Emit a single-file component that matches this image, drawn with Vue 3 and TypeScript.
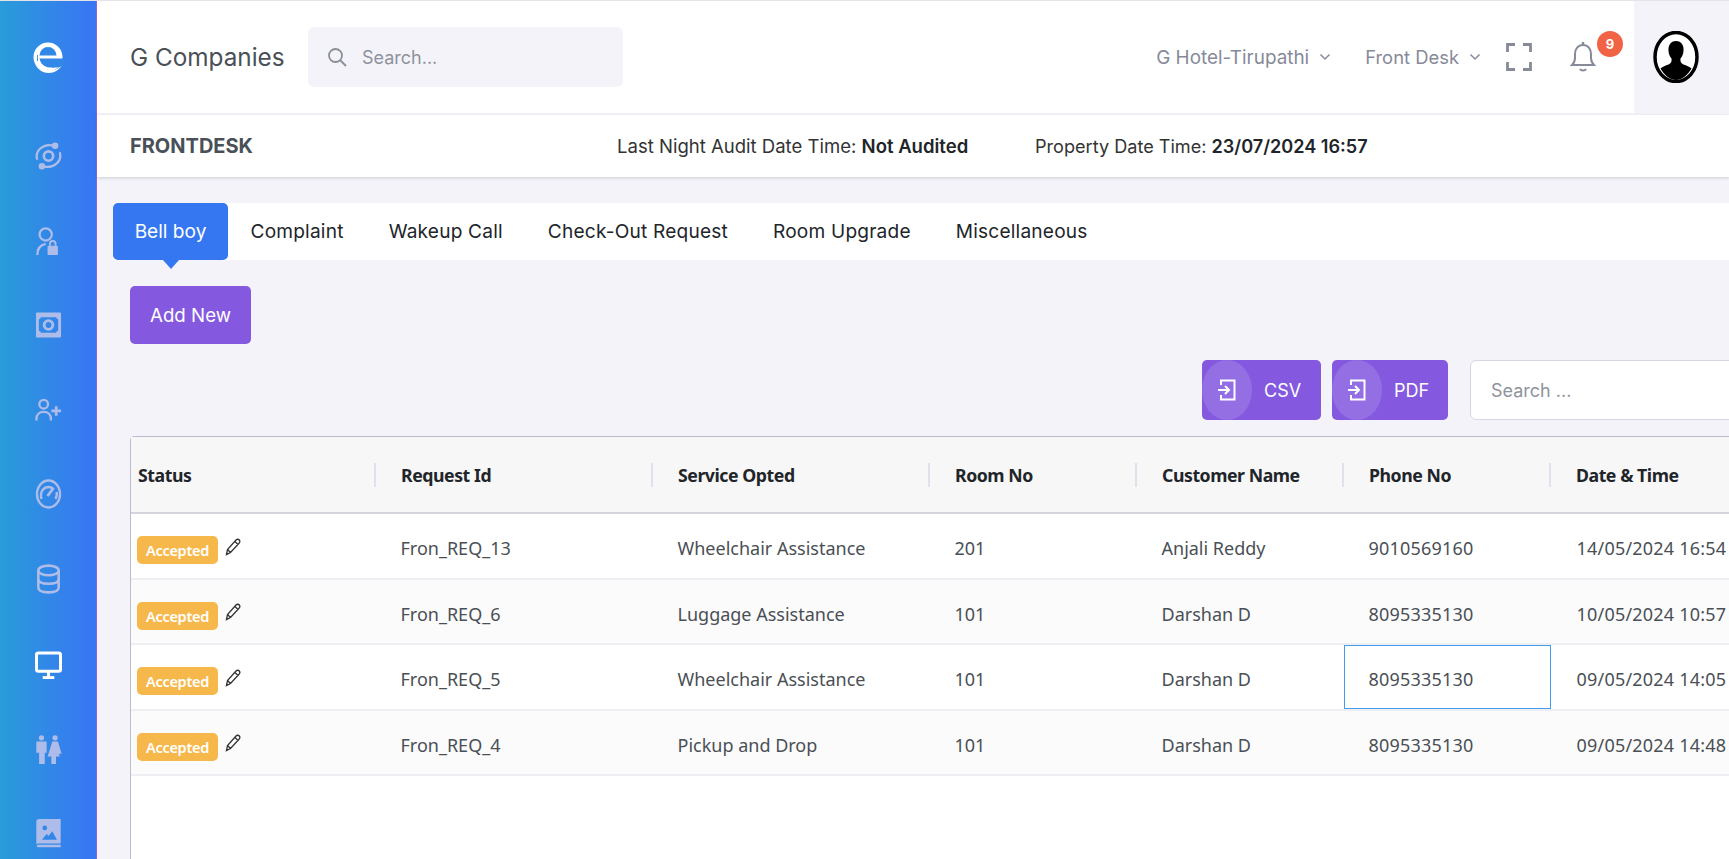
<script setup lang="ts">
const tabs = ['Complaint', 'Wakeup Call', 'Check-Out Request', 'Room Upgrade', 'Miscellaneous']
const headers = ['Status', 'Request Id', 'Service Opted', 'Room No', 'Customer Name', 'Phone No', 'Date & Time']
const rows = [
  { id: 'Fron_REQ_13', service: 'Wheelchair Assistance', room: '201', name: 'Anjali Reddy', phone: '9010569160', date: '14/05/2024 16:54' },
  { id: 'Fron_REQ_6', service: 'Luggage Assistance', room: '101', name: 'Darshan D', phone: '8095335130', date: '10/05/2024 10:57' },
  { id: 'Fron_REQ_5', service: 'Wheelchair Assistance', room: '101', name: 'Darshan D', phone: '8095335130', date: '09/05/2024 14:05' },
  { id: 'Fron_REQ_4', service: 'Pickup and Drop', room: '101', name: 'Darshan D', phone: '8095335130', date: '09/05/2024 14:48' },
]
</script>

<template>
  <div class="page">
    <aside class="sidebar">
      <div class="logo">
        <svg width="30" height="32" viewBox="0 0 30 32">
          <circle cx="15" cy="15" r="14.500" fill="#fff" />
          <path d="M1.500 21c3 7 9 10 14 10 6 0 11-3 14-9-3 4-8 7-14 7-6 0-11-3-14-8z" fill="#fff" />
          <path d="M6.500 13.500a8.500 8.500 0 0 1 17 0z" fill="#3188e6" />
          <path d="M6.500 16.500H31v6c-4 3-9 3.500-14.500 3-5.500-.5-9-4-10-9z" fill="#3188e6" />
          <path d="M4.500 13v6" fill="none" stroke="#3188e6" stroke-width=".9" />
        </svg>
      </div>
      <div class="nav">
        <svg class="ic dim" viewBox="0 0 28 32"><circle cx="14" cy="16" r="5" fill="none" stroke="currentColor" stroke-width="2.800" /><path d="M2 20C-1 10 9 2 20 5M26 12c3 10-7 18-18 15" fill="none" stroke="currentColor" stroke-width="2.400" /><circle cx="21" cy="5" r="3.500" fill="currentColor" /><circle cx="7" cy="27" r="3.500" fill="currentColor" /></svg>
      </div>
      <div class="nav">
        <svg class="ic dim" viewBox="0 0 28 32"><circle cx="11" cy="9" r="6.500" fill="none" stroke="currentColor" stroke-width="2.400" /><path d="M2 31c0-7 4-11 9-12" fill="none" stroke="currentColor" stroke-width="2.400" /><rect x="13" y="21" width="11" height="10" rx="1" fill="currentColor" /><path d="M15.500 21v-2a3 3 0 0 1 6 0v2" fill="none" stroke="currentColor" stroke-width="2" /></svg>
      </div>
      <div class="nav">
        <svg class="ic dim" viewBox="0 0 28 28"><path fill-rule="evenodd" fill="currentColor" d="M2 1h24a1 1 0 0 1 1 1v24a1 1 0 0 1-1 1H2a1 1 0 0 1-1-1V2a1 1 0 0 1 1-1zm4 5c0 1-1 2-2 2v12c1 0 2 1 2 2h16c0-1 1-2 2-2V8c-1 0-2-1-2-2zm8 2a6 6 0 1 1 0 12 6 6 0 0 1 0-12zm0 3a3 3 0 1 0 0 6 3 3 0 0 0 0-6z" /></svg>
      </div>
      <div class="nav">
        <svg class="ic dim" viewBox="0 0 28 24"><circle cx="9" cy="6" r="4.500" fill="none" stroke="currentColor" stroke-width="2.400" /><path d="M1.500 23v-2c0-4 3-7 7.500-7s7.500 3 7.500 7v2" fill="none" stroke="currentColor" stroke-width="2.400" /><path d="M22 8v10M17 13h10" stroke="currentColor" stroke-width="2.800" /></svg>
      </div>
      <div class="nav">
        <svg class="ic dim" viewBox="0 0 26 30"><ellipse cx="13" cy="15" rx="11.500" ry="13.500" fill="none" stroke="currentColor" stroke-width="2.400" /><path d="M6 20c-2-7 2-12 7-12 2 0 4 1 5 2M21 13c1 3 0 5-1 7" fill="none" stroke="currentColor" stroke-width="2.400" /><path d="M12 17l6-8" stroke="currentColor" stroke-width="2.800" /></svg>
      </div>
      <div class="nav">
        <svg class="ic dim" viewBox="0 0 24 28"><ellipse cx="12" cy="6" rx="9.500" ry="4.500" fill="none" stroke="currentColor" stroke-width="2.400" /><path d="M2.500 6v16c0 3 4 4.500 9.500 4.500s9.500-1.500 9.500-4.500V6M2.500 14c0 3 4 4.500 9.500 4.500s9.500-1.500 9.500-4.500" fill="none" stroke="currentColor" stroke-width="2.400" /></svg>
      </div>
      <div class="nav low3">
        <svg class="ic on" viewBox="0 0 28 30"><rect x="1.500" y="1.500" width="25" height="19" rx="2" fill="none" stroke="currentColor" stroke-width="3.200" /><path d="M14 21v5" stroke="currentColor" stroke-width="3.200" /><path d="M8 27h12" stroke="currentColor" stroke-width="3" /></svg>
      </div>
      <div class="nav low2">
        <svg class="ic dim" viewBox="0 0 28 32"><circle cx="6.500" cy="3" r="2.800" fill="currentColor" /><circle cx="21" cy="3" r="2.800" fill="currentColor" /><path fill="currentColor" d="M1 7h11v12H10v12H4V19H1zM18 7h6l4 13h-3l1 3h-4v8h-5v-8h-4l2-6z" /></svg>
      </div>
      <div class="nav low2">
        <svg class="ic dim" viewBox="0 0 26 32"><path fill-rule="evenodd" fill="currentColor" d="M3 0h23v26H3c-1 0-2 0-3 1V3a3 3 0 0 1 3-3zm6 7a2.500 2.500 0 1 0 0 5 2.500 2.500 0 0 0 0-5zm-3 15h16l-5-9-4 5-2-2z" /><path d="M.5 29c0-1 1-1.500 2.500-1.500h23v2.500H3c-1.500 0-2.500 0-2.500-1z" fill="currentColor" /></svg>
      </div>
    </aside>

    <main class="main">
      <header class="topbar">
        <span class="brand">G Companies</span>
        <div class="global-search">
          <svg class="search-ic" width="20" height="20" viewBox="0 0 20 20"><circle cx="8.500" cy="8.500" r="6.500" fill="none" stroke="#8a8f99" stroke-width="1.800" /><path d="M13.500 13.500L19 19" stroke="#8a8f99" stroke-width="1.800" /></svg>
          <span>Search...</span>
        </div>
        <div class="spacer"></div>
        <span class="menu hotel">G Hotel-Tirupathi<svg class="chev" viewBox="0 0 12 8"><path d="M1.500 1.500L6 6l4.500-4.500" fill="none" stroke="currentColor" stroke-width="1.500" /></svg></span>
        <span class="menu desk">Front Desk<svg class="chev" viewBox="0 0 12 8"><path d="M1.500 1.500L6 6l4.500-4.500" fill="none" stroke="currentColor" stroke-width="1.500" /></svg></span>
        <svg class="expand" width="26" height="28" viewBox="0 0 26 28"><path d="M1.500 9V1.500H9M17 1.500h7.500V9M24.500 19v7.500H17M9 26.500H1.500V19" fill="none" stroke="#878a99" stroke-width="2.800" /></svg>
        <div class="bell">
          <svg width="26" height="32" viewBox="0 0 26 32"><path d="M2 24c2-2 3-4 3-7v-4c0-5 3-9 8-9s8 4 8 9v4c0 3 1 5 3 7z" fill="none" stroke="#878a99" stroke-width="2" /><path d="M13 1v3" stroke="#878a99" stroke-width="2.400" /><path d="M10 28c1 2 5 2 6 0" fill="none" stroke="#878a99" stroke-width="2" /></svg>
          <span class="badge">9</span>
        </div>
        <div class="avatar-cell">
          <svg width="46" height="52" viewBox="0 0 46 52"><ellipse cx="23" cy="26" rx="21" ry="24.500" fill="#fff" stroke="#000" stroke-width="3.500" /><path d="M23 10c-5.500 0-8 4.500-7.500 10 .3 3 1.300 5.500 3 7.500.5 3-.5 5-3 6-3 1-6 2-8 4 4 7 10 11.500 15.500 11.500S34.500 44.500 38.500 37.500c-2-2-5-3-8-4-2.500-1-3.500-3-3-6 1.700-2 2.700-4.500 3-7.500C31 14.500 28.500 10 23 10z" fill="#000" /></svg>
        </div>
      </header>

      <section class="subbar">
        <strong class="title">FRONTDESK</strong>
        <span class="audit">Last Night Audit Date Time: <b>Not Audited</b></span>
        <span class="prop">Property Date Time: <b>23/07/2024 16:57</b></span>
      </section>

      <nav class="tabs">
        <span class="tab active">Bell boy</span>
        <span v-for="t in tabs" :key="t" class="tab">{{ t }}</span>
      </nav>

      <div class="content">
        <button class="add">Add New</button>
        <div class="tools">
          <button class="export csv">
            <span class="bubble"><svg width="18" height="22" viewBox="0 0 18 22"><path d="M3 6V1.500h13.500v19H3V16" fill="none" stroke="#fff" stroke-width="2" /><path d="M0 11h10M7 7l4 4-4 4" fill="none" stroke="#fff" stroke-width="2" /></svg></span>
            <span>CSV</span>
          </button>
          <button class="export pdf">
            <span class="bubble"><svg width="18" height="22" viewBox="0 0 18 22"><path d="M3 6V1.500h13.500v19H3V16" fill="none" stroke="#fff" stroke-width="2" /><path d="M0 11h10M7 7l4 4-4 4" fill="none" stroke="#fff" stroke-width="2" /></svg></span>
            <span>PDF</span>
          </button>
          <div class="table-search">Search ...</div>
        </div>

        <div class="table">
          <div class="row head">
            <div v-for="(h, i) in headers" :key="h" class="th" :class="{ first: i === 0 }">{{ h }}</div>
          </div>
          <div v-for="(r, i) in rows" :key="r.id" class="row body" :class="{ odd: i % 2 === 1 }">
            <div class="td first">
              <span class="pill">Accepted</span>
              <svg class="pen" width="16" height="18" viewBox="0 0 16 18"><path d="M1.500 16.500l1-5L11 2c1-1 2.500-1 3.300 0s.7 2.200-.3 3.200L5.500 14.500z M10 3.500l3 3M2.500 11.500l3 3" fill="none" stroke="#333" stroke-width="1.300" /></svg>
            </div>
            <div class="td">{{ r.id }}</div>
            <div class="td">{{ r.service }}</div>
            <div class="td">{{ r.room }}</div>
            <div class="td">{{ r.name }}</div>
            <div class="td num" :class="{ focus: i === 2 }">{{ r.phone }}</div>
            <div class="td num date">{{ r.date }}</div>
          </div>
        </div>
      </div>
    </main>
  </div>
</template>

<style>
html, body { margin: 0; overflow: hidden; background: #f3f3f9; }
</style>

<style scoped>
.page {
  display: flex;
  width: 1729px;
  height: 859px;
  overflow: hidden;
  background: #f3f3f9;
  border-top: 1px solid #e4e4e8;
  box-sizing: border-box;
  font-family: "Inter", "Noto Sans", sans-serif;
}
.sidebar {
  flex: 0 0 97px;
  box-sizing: border-box;
  border-right: 1px solid #8f62e0;
  background: linear-gradient(90deg, #299cd9, #3974f5);
  display: flex;
  flex-direction: column;
  align-items: center;
}
.logo { height: 113px; flex: none; padding-top: 41px; box-sizing: border-box; display: flex; justify-content: center; align-items: flex-start; }
.nav { height: 84.500px; flex: none; display: flex; align-items: center; justify-content: center; box-sizing: border-box; }
.low3 { padding-top: 6px; }
.low2 { padding-top: 4px; }
.ic { width: 27px; height: 30px; }
.dim { color: #aebce9; }
.on { color: #fff; }
.main { flex: 1; min-width: 0; display: flex; flex-direction: column; }
.topbar {
  height: 112px;
  flex: none;
  display: flex;
  align-items: center;
  background: #fff;
  padding-left: 33px;
}
.brand { font-size: 24.300px; color: #495057; width: 178px; flex: none; }
.global-search {
  width: 315px;
  height: 60px;
  border-radius: 6px;
  background: #f3f3f9;
  display: flex;
  align-items: center;
  gap: 15px;
  padding-left: 19px;
  box-sizing: border-box;
  font-size: 18px;
  color: #8f929c;
}
.search-ic { flex: none; }
.spacer { flex: 1; }
.menu { display: flex; align-items: center; color: #878a99; font-size: 18.400px; }
.chev { width: 12px; height: 8px; margin-left: 10px; }
.hotel { margin-right: 34px; font-size: 18.900px; }
.desk { margin-right: 25px; }
.expand { margin-right: 38px; }
.bell { position: relative; width: 26px; height: 32px; margin-right: 38px; }
.badge {
  position: absolute;
  left: 27px;
  top: -10px;
  width: 26px;
  height: 26px;
  border-radius: 50%;
  background: #f06445;
  color: #fff;
  font-size: 13px;
  font-weight: 700;
  display: flex;
  align-items: center;
  justify-content: center;
}
.avatar-cell {
  width: 95px;
  height: 112px;
  background: #f3f3f9;
  display: flex;
  align-items: center;
  justify-content: center;
  box-sizing: border-box;
  padding-right: 11px;
  flex: none;
}
.subbar {
  margin-top: 2px;
  height: 62px;
  flex: none;
  display: flex;
  align-items: center;
  background: #fff;
  box-shadow: 0 1px 3px rgba(56, 65, 74, .2);
  padding-left: 33px;
  color: #333;
  font-size: 18.100px;
}
.title { width: 487px; font-size: 20px; color: #495057; font-weight: 700; flex: none; }
.audit { width: 418px; flex: none; font-size: 18.550px; }
.subbar b { font-weight: 600; color: #212529; }
.tabs {
  margin: 26px 0 0 16px;
  height: 57px;
  flex: none;
  display: flex;
  align-items: center;
  background: #fff;
  font-size: 19.100px;
  letter-spacing: .2px;
  color: #212529;
}
.tab { padding: 0 22.500px; line-height: 57px; }
.tab.active {
  position: relative;
  width: 115px;
  box-sizing: border-box;
  padding: 0;
  text-align: center;
  height: 57px;
  background: #3577f1;
  color: #fff;
  border-radius: 5px;
  letter-spacing: 0;
}
.tab.active::after {
  content: "";
  position: absolute;
  left: 49.500px;
  top: 57px;
  border: 8px solid transparent;
  border-top: 9px solid #3577f1;
  border-bottom: 0;
}
.content { padding: 26px 0 0 33px; flex: 1; min-height: 0; }
.add {
  display: block;
  width: 121px;
  height: 58px;
  background: #8459df;
  border: 0;
  border-radius: 5px;
  font: inherit;
  font-size: 18.700px;
  color: #fff;
  padding: 0;
}
.tools {
  margin-top: 16px;
  height: 60px;
  display: flex;
  padding-left: 1072px;
}
.export {
  position: relative;
  overflow: hidden;
  height: 60px;
  border: 0;
  border-radius: 5px;
  background: #8459df;
  color: #fff;
  font: inherit;
  font-size: 18px;
  padding: 0;
  display: flex;
  align-items: center;
  flex: none;
}
.csv { width: 119px; margin-right: 11px; padding-left: 62px; }
.pdf { width: 116px; margin-right: 22px; padding-left: 62px; }
.bubble {
  position: absolute;
  left: 0;
  top: 0;
  width: 50px;
  height: 60px;
  border-radius: 50%;
  background: #946fe4;
  display: flex;
  align-items: center;
  justify-content: center;
}
.table-search {
  width: 300px;
  flex: none;
  height: 60px;
  box-sizing: border-box;
  border: 1px solid #d5d8e0;
  border-radius: 6px;
  background: #fff;
  color: #8f939c;
  font-size: 18px;
  display: flex;
  align-items: center;
  padding-left: 20px;
}
.table {
  margin: 16px 0 0 0;
  width: 1700px;
  height: 500px;
  box-sizing: border-box;
  border: 1px solid #b9bdca;
  border-radius: 4px 0 0 0;
  background: #fff;
  font-family: "Noto Sans", "Open Sans", sans-serif;
}
.row {
  display: grid;
  grid-template-columns: 245px 277px 277px 207px 207px 207px 1fr;
}
.head {
  height: 77px;
  align-items: center;
  background: #f7f7f8;
  border-bottom: 2px solid #d3d4dc;
  box-sizing: border-box;
}
.th {
  position: relative;
  padding-left: 25px;
  font-weight: 700;
  font-size: 17.700px;
  letter-spacing: -.45px;
  color: #212529;
}
.th.first { padding-left: 7px; }
.th:not(:last-child)::after {
  content: "";
  position: absolute;
  right: 0;
  top: 0;
  bottom: 0;
  width: 2px;
  background: #dfe2ec;
}
.body {
  height: 65.500px;
  box-sizing: border-box;
  border-bottom: 2px solid #eeeef3;
  color: #4a4f55;
  font-size: 18px;
}
.odd { background: #fbfbfc; }
.td {
  display: flex;
  align-items: center;
  padding: 5px 0 0 24.500px;
  box-sizing: border-box;
  min-width: 0;
}
.num { letter-spacing: .2px; }
.date { padding-left: 25.500px; }
.td.first { padding-left: 6px; align-items: center; }
.focus { border: 1px solid #3f9eee; padding-left: 23.500px; padding-top: 4px; }
.pill {
  width: 81px;
  height: 28px;
  border-radius: 5px;
  background: #f7b84b;
  color: #fff;
  font-size: 14.500px;
  font-weight: 600;
  letter-spacing: -.3px;
  display: flex;
  align-items: center;
  justify-content: center;
  margin-top: 4px;
}
.pen { margin: -3px 0 0 7px; }
</style>
